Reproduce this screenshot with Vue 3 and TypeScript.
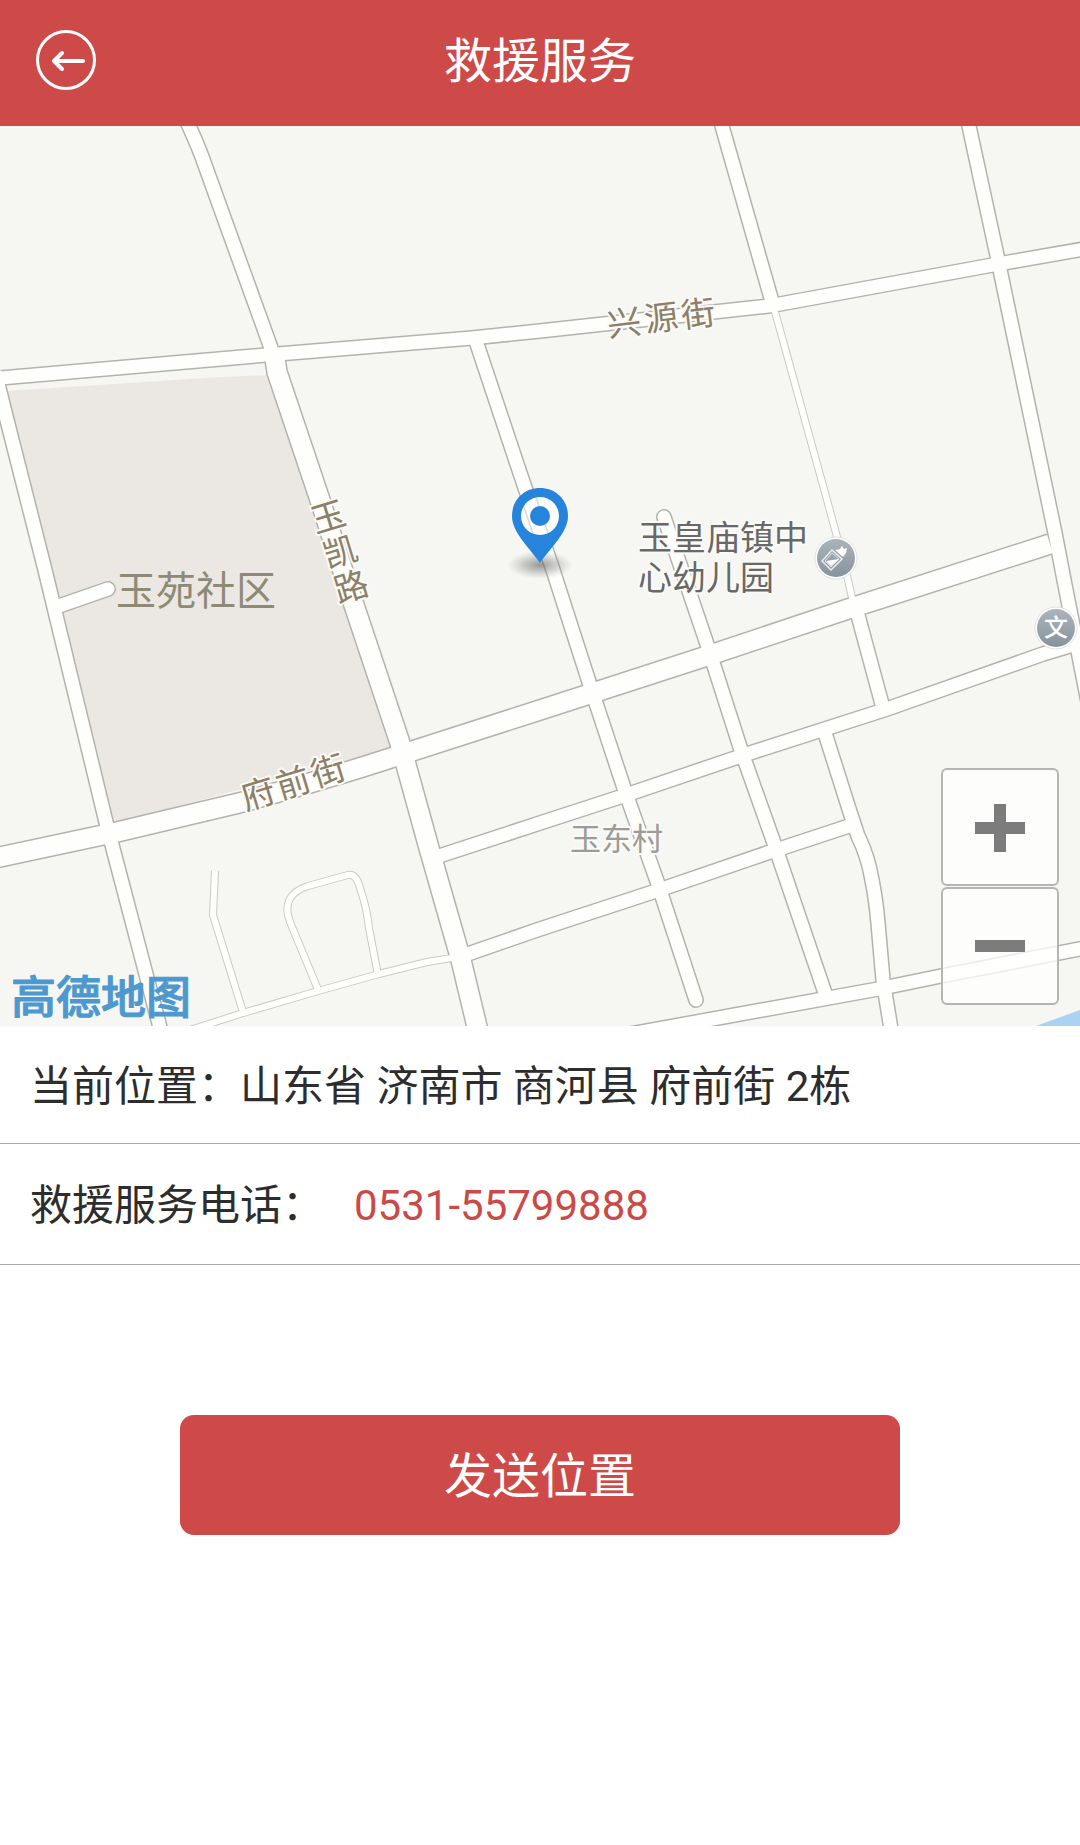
<script setup lang="ts">
import { ref } from 'vue'

interface Road {
  kind: 'main' | 'street' | 'lane'
  d: string
  round?: boolean
}

interface RoadSign {
  char: string
  x: number
  y: number
  angle: number
}

const address = ref('山东省 济南市 商河县 府前街 2栋')
const phone = ref('0531-55799888')

const roads: Road[] = [
  { kind: 'lane', d: 'M215 871 L213 915 L243 1012' },
  { kind: 'lane', d: 'M319 992 L290 922 Q280 895 308 886 L348 875 Q356 873 360 888 Q367 908 369 928 L378 975' },
  { kind: 'lane', d: 'M190 1030 L243 1013 L318 991 L379 974 L427 962 L458 957' },
  { kind: 'lane', d: 'M774 308 L827 500 L836 533 L848 580 L853 602' },
  { kind: 'street', d: 'M184 116 L189 126 Q200 150 206 168 L271 348 L275 360' },
  { kind: 'street', d: 'M-10 379 L0 378 L266 355 L472 338 L540 331 L640 320 L769 306 L998 264 L1090 248' },
  { kind: 'street', d: 'M-5 372 L7 420 L45 570 L106 822 L162 1035' },
  { kind: 'street', d: 'M56 607 L108 589', round: true },
  { kind: 'street', d: 'M967 116 L969 126 L998 260 L1055 533 L1064 580 L1090 712' },
  { kind: 'street', d: 'M719 116 L722 126 L771 298 L773 306' },
  { kind: 'street', d: 'M475 338 L519 470 L553 570 L590 685 L624 788 L658 884 L696 1000', round: true },
  { kind: 'street', d: 'M664 517 L690 594 L707 644 L741 750 L774 843 L825 993', round: true },
  { kind: 'street', d: 'M856 608 L882 704' },
  { kind: 'street', d: 'M430 859 L540 823 L620 797 L750 753 L884 710 L1043 654 L1076 644' },
  { kind: 'street', d: 'M462 956 L540 929 L653 892 L770 852 L852 825' },
  { kind: 'street', d: 'M824 730 L850 812 L858 836 Q868 856 872 880 Q876 900 878 923 L883 980 L892 1035' },
  { kind: 'street', d: 'M630 1034 L878 989 L941 976 L1090 947' },
  { kind: 'main', d: 'M274 352 L277 372 L320 500 L354 605 L400 743 L429 848 L461 960 L479 1035' },
  { kind: 'main', d: 'M-10 859 L0 857 L117 832 L243 802 Q330 778 400 755 L540 710 L710 655 L851 608 L1050 544' },
]

const signs: RoadSign[] = [
  { char: '兴', x: 624, y: 322, angle: -7 },
  { char: '源', x: 661, y: 317, angle: -7 },
  { char: '街', x: 698, y: 313, angle: -7 },
  { char: '玉', x: 328, y: 516, angle: -17 },
  { char: '凯', x: 340, y: 551, angle: -17 },
  { char: '路', x: 351, y: 586, angle: -17 },
  { char: '府', x: 258, y: 793, angle: -17 },
  { char: '前', x: 293, y: 782, angle: -17 },
  { char: '街', x: 328, y: 770, angle: -17 },
]
</script>

<template>
  <div class="page">
    <header class="bar">
      <button class="back" type="button" aria-label="返回">
        <svg viewBox="0 0 60 60" width="60" height="60" fill="none" stroke="#fff">
          <circle cx="30" cy="30" r="28.5" stroke-width="3" />
          <path d="M47 31 H18 M26 23 L18 31 L26 39" stroke-width="4" stroke-linecap="round" stroke-linejoin="round" />
        </svg>
      </button>
      <h1 class="title">救援服务</h1>
    </header>

    <section class="map" aria-label="地图">
      <svg class="canvas" viewBox="0 126 1080 900">
        <defs>
          <linearGradient id="poi" x1="0" y1="0" x2="0" y2="1">
            <stop offset="0" stop-color="#acb4ba" />
            <stop offset="1" stop-color="#87939c" />
          </linearGradient>
          <radialGradient id="shade">
            <stop offset="0" stop-color="#555" stop-opacity="0.6" />
            <stop offset="0.5" stop-color="#777" stop-opacity="0.35" />
            <stop offset="1" stop-color="#999" stop-opacity="0" />
          </radialGradient>
        </defs>

        <path d="M5 391 L206 378 L268 375 L315 510 L392 748 L113 824 Z" fill="#ebe8e3" />
        <path d="M1036 1026 L1080 1010 V1026 Z" fill="#a9d2f3" />

        <path
          v-for="(road, i) in roads"
          :key="'edge' + i"
          :d="road.d"
          :class="['edge', road.kind, { round: road.round }]"
        />
        <path
          v-for="(road, i) in roads"
          :key="'fill' + i"
          :d="road.d"
          :class="['fill', road.kind, { round: road.round }]"
        />

        <text
          v-for="(sign, i) in signs"
          :key="'sign' + i"
          class="sign"
          :transform="`translate(${sign.x} ${sign.y}) rotate(${sign.angle})`"
          y="13"
        >{{ sign.char }}</text>

        <text class="area" x="116" y="605">玉苑社区</text>
        <text class="place"><tspan x="638" y="550">玉皇庙镇中</tspan><tspan x="638" y="590">心幼儿园</tspan></text>
        <text class="village" x="570" y="850">玉东村</text>

        <g transform="translate(836 558)">
          <circle r="21" fill="#fff" stroke="#dfe3e6" stroke-width="1" />
          <circle r="19" fill="url(#poi)" />
          <path d="M-14 3 L-4 -8 L6 1 L-5 12 Z" fill="none" stroke="#e9edf0" stroke-width="1.5" />
          <path d="M-11 3 L-4 -5 L3 1 L-5 9 Z" fill="none" stroke="#dfe4e8" stroke-width="1" />
          <path d="M-10 3 L3 1 L-5 8 Z M-1 -8 L4 -9 L6 -12 L8 -9 L11 -10 L10 -5 L7 -1 Z" fill="#fff" />
        </g>
        <g transform="translate(1056 628)">
          <circle r="21" fill="#fff" stroke="#dfe3e6" stroke-width="1" />
          <circle r="19" fill="url(#poi)" />
          <text class="school" y="8">文</text>
        </g>

        <ellipse cx="540" cy="565" rx="33" ry="14" fill="url(#shade)" />
        <circle cx="540" cy="516" r="20" fill="#fff" fill-opacity="0.5" />
        <path
          fill="#2684dc"
          fill-rule="evenodd"
          d="M540 488 C556 488 568 500 568 516 C568 532 552 546 540 563 C528 546 512 532 512 516 C512 500 524 488 540 488 Z M540 497 A19 19 0 1 0 540 535 A19 19 0 1 0 540 497 Z"
        />
        <circle cx="540" cy="516" r="10" fill="#2684dc" />

        <text class="brand" x="11" y="1014">高德地图</text>
      </svg>

      <div class="zoom">
        <button type="button" aria-label="放大">
          <svg viewBox="0 0 50 50" width="50" height="50"><path d="M0 20 H19 V2 H31 V20 H50 V32 H31 V50 H19 V32 H0 Z" fill="#7c7c7c" /></svg>
        </button>
        <button type="button" aria-label="缩小">
          <svg viewBox="0 0 50 50" width="50" height="50"><path d="M0 19 H50 V31 H0 Z" fill="#7c7c7c" /></svg>
        </button>
      </div>
    </section>

    <p class="row">当前位置：{{ address }}</p>
    <p class="row tall">救援服务电话：<a class="phone" :href="'tel:' + phone">{{ phone }}</a></p>

    <button class="send" type="button">发送位置</button>
  </div>
</template>

<style>
body {
  margin: 0;
  background: #fff;
}
</style>

<style scoped>
.page {
  font-family: Roboto, 'Noto Sans CJK SC', sans-serif;
  color: #2d2d2d;
}

.bar {
  display: grid;
  grid-template-columns: 60px 1fr 60px;
  align-items: start;
  box-sizing: border-box;
  height: 126px;
  padding: 30px 36px 0;
  background: #cd4a48;
  color: #fff;
}

.back {
  padding: 0;
  border: 0;
  background: none;
  line-height: 0;
}

.title {
  margin: 0;
  font-size: 48px;
  line-height: 64px;
  font-weight: 400;
  text-align: center;
}

.map {
  position: relative;
  background: #f6f6f3;
}

.canvas {
  display: block;
  width: 100%;
  height: auto;
}

.edge,
.fill {
  fill: none;
  stroke-linejoin: round;
}

.edge {
  stroke: #b3b3ae;
}

.edge.lane {
  stroke: #cacac5;
}

.fill {
  stroke: #fefefc;
}

.round {
  stroke-linecap: round;
}

.edge.main {
  stroke-width: 22px;
}

.fill.main {
  stroke-width: 19px;
}

.edge.street {
  stroke-width: 16px;
}

.fill.street {
  stroke-width: 13px;
}

.edge.lane {
  stroke-width: 8px;
}

.fill.lane {
  stroke-width: 6px;
}

.sign,
.area,
.place,
.village,
.brand,
.school {
  font-family: 'Noto Sans CJK SC', sans-serif;
  paint-order: stroke;
  stroke: #fbfaf6;
  stroke-width: 4px;
  stroke-linejoin: round;
}

.sign {
  font-size: 34px;
  text-anchor: middle;
  fill: #8b8069;
}

.area {
  font-size: 40px;
  fill: #8f8a78;
  stroke: none;
}

.place {
  font-size: 34px;
  fill: #686868;
}

.village {
  font-size: 31px;
  fill: #9b9b98;
}

.brand {
  font-size: 45px;
  font-weight: 500;
  fill: #4d98cf;
  stroke: #4d98cf;
  stroke-width: 1px;
}

.school {
  font-size: 24px;
  font-weight: 500;
  text-anchor: middle;
  fill: #fff;
  stroke: none;
}

.zoom {
  position: absolute;
  right: 21px;
  bottom: 21px;
  display: grid;
  gap: 1px;
}

.zoom button {
  display: grid;
  place-items: center;
  width: 118px;
  height: 118px;
  padding: 0;
  border: 2px solid #b5b5b3;
  border-radius: 6px;
  background: rgba(255, 255, 255, 0.75);
}

.row {
  display: flex;
  align-items: center;
  box-sizing: border-box;
  height: 118px;
  margin: 0;
  padding: 4px 30px 0;
  border-bottom: 1px solid #a8a8a8;
  font-size: 42px;
  line-height: 60px;
}

.tall {
  height: 121px;
}

.phone {
  margin-left: 30px;
  color: #c94a48;
  text-decoration: none;
}

.send {
  display: block;
  width: calc(100% * 2 / 3);
  height: 120px;
  margin: 150px auto 0;
  padding: 0 0 6px;
  border: 0;
  border-radius: 14px;
  background: #cd4a48;
  color: #fff;
  font-family: inherit;
  font-size: 48px;
}
</style>
